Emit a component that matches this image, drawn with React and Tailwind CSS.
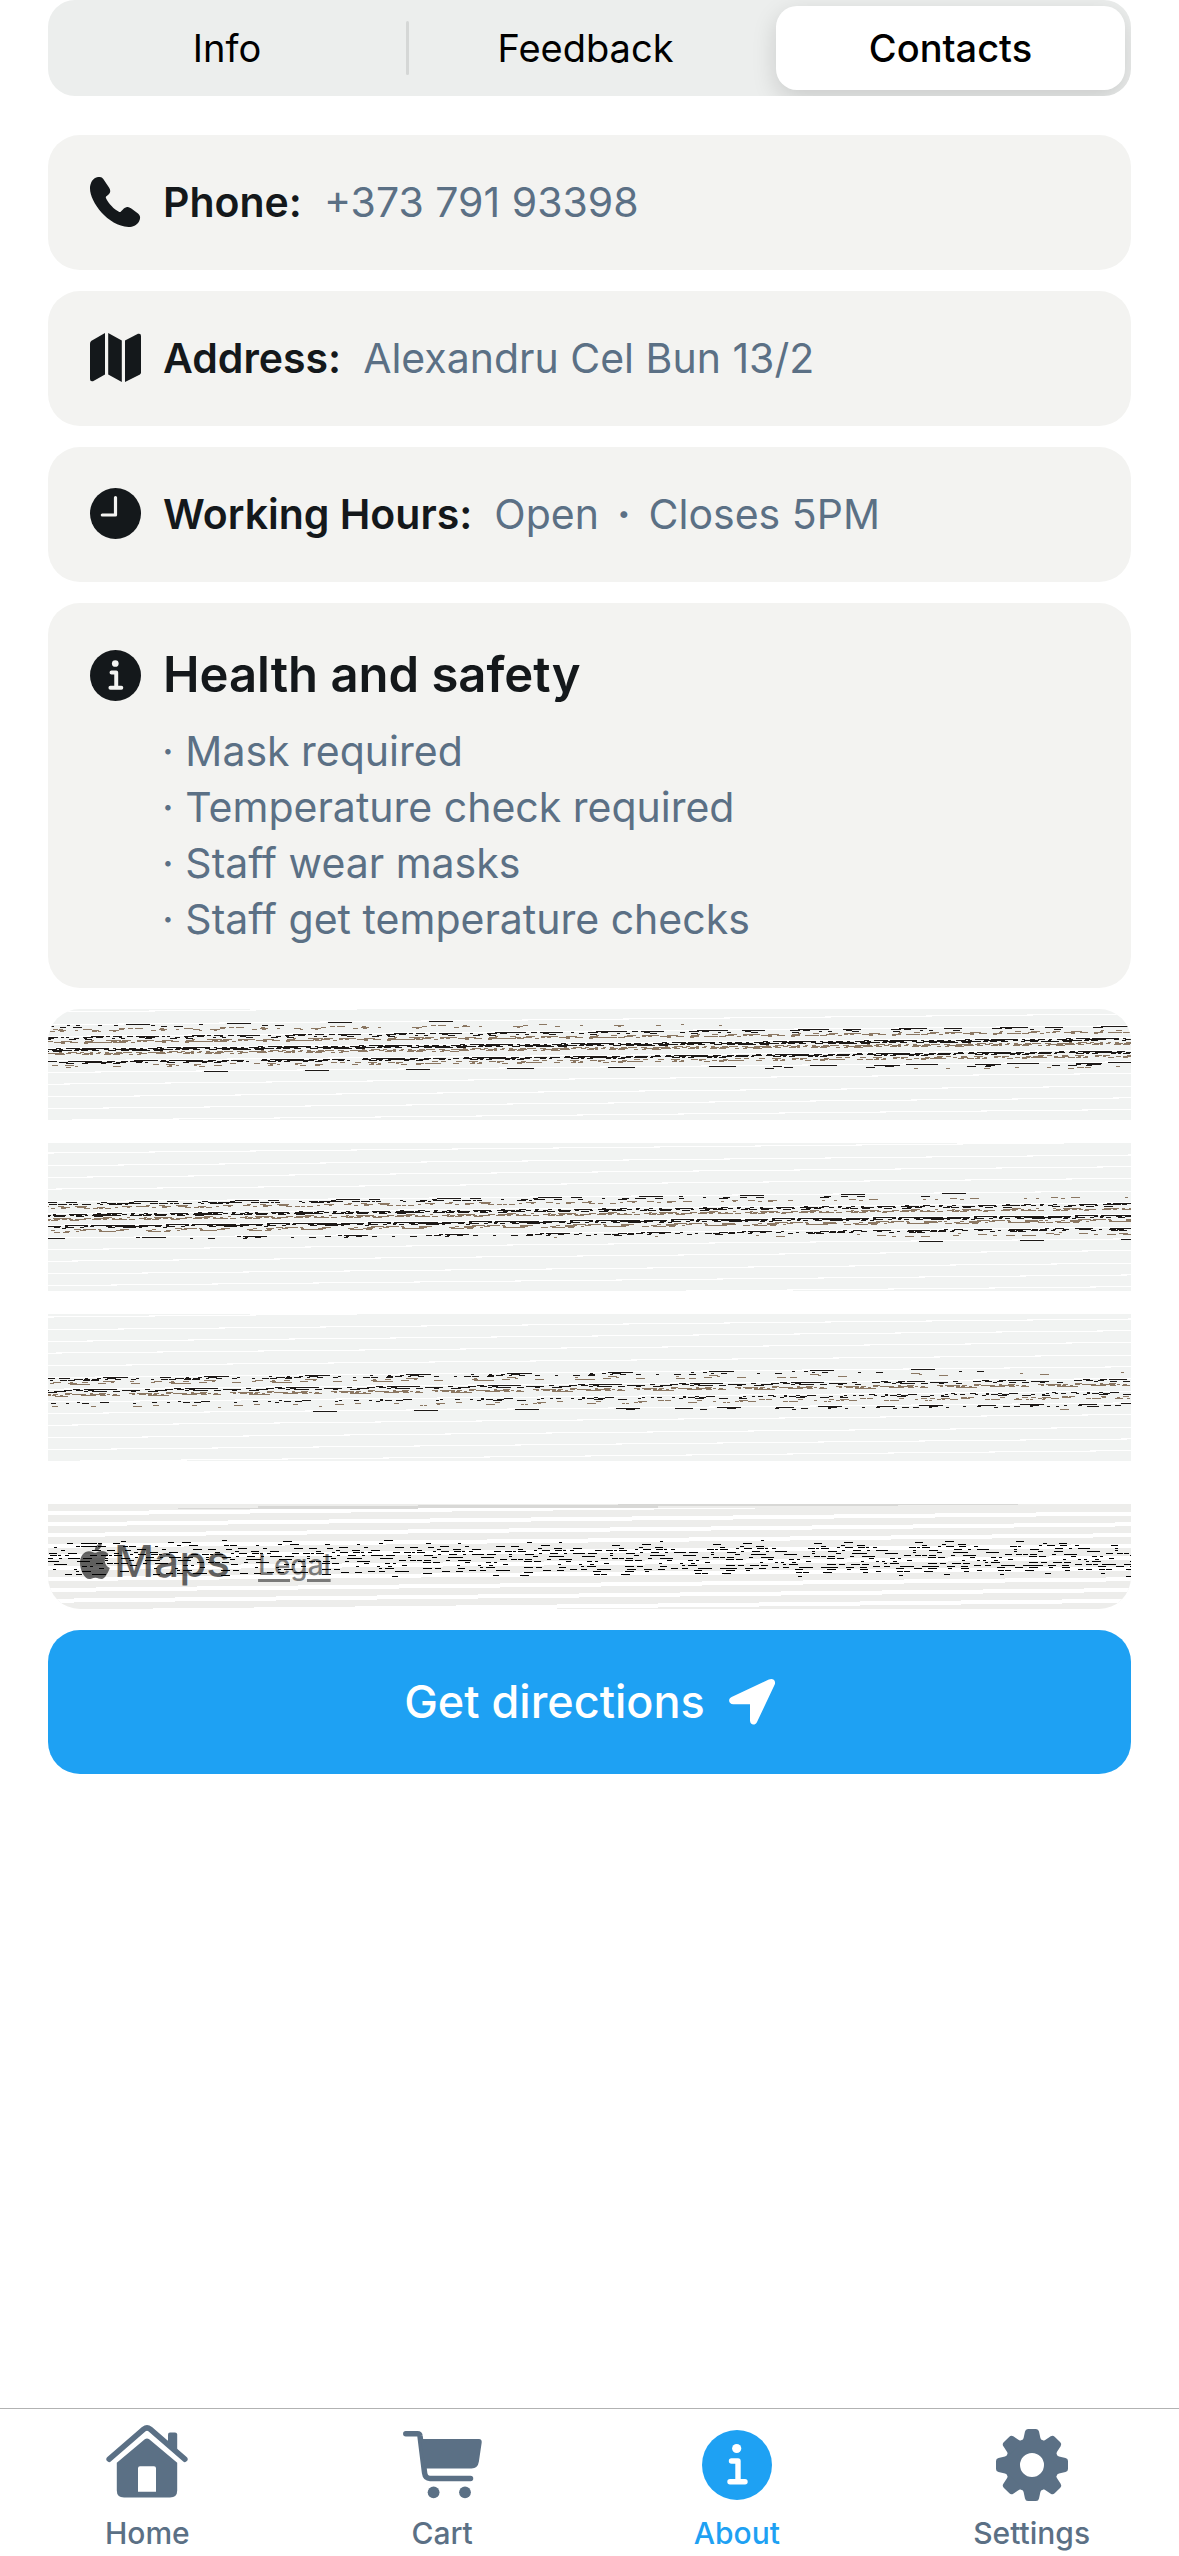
import React from "react";

const MAP_WIDTH = 1083;
const MAP_HEIGHT = 600;
const PERIOD = 101;

// Deterministic value between 0 and 1 for a pair of integers.
function noise(a, b) {
  let h = Math.imul(a + 11, 374761393) + Math.imul(b + 7, 668265263);
  h = Math.imul(h ^ (h >>> 13), 1274126177);
  return ((h ^ (h >>> 16)) >>> 0) / 4294967296;
}

function dash(x, y, w) {
  const left = Math.max(0, x);
  const right = Math.min(MAP_WIDTH, x + w);
  return right > left ? `M${left} ${y}h${right - left}v1h${left - right}z` : "";
}

// Hairlines that climb one pixel per period.
function hairlines(top, bottom, offset) {
  let d = "";
  for (let j = -1; j < 26; j++) {
    for (let k = -1; k < 12; k++) {
      const y = top + offset + j * 12 - k;
      if (y >= top && y < bottom) d += dash(k * PERIOD + ((j * 70) % PERIOD), y, PERIOD + 6);
    }
  }
  return d;
}

function dashes(band, rows, kind) {
  let d = "";
  for (let j = -1; j < 16; j++) {
    for (const s of rows) {
      for (let k = -1; k < 12; k++) {
        const y = band.top + band.offset + j * band.step - k + s;
        const dist = Math.abs(y - band.center) / band.reach;
        if (dist > 1) continue;
        const density = (1 - dist * dist) * band.fill;
        const count = 13;
        for (let i = 0; i < count; i++) {
          const seed = s * 31 + kind * 7 + j * 101 + band.top;
          if (noise(seed, i) > density) continue;
          const long = noise(seed + 5, i) > 0.86 && s < 3 && kind < 3;
          const w = long ? 18 : 3 + Math.floor(noise(seed + 9, i) * 7);
          const x = k * PERIOD + ((j * 70) % PERIOD) + i * 8 + Math.floor(noise(seed + 3, i) * 5);
          d += dash(x, y, w);
        }
      }
      // Sparse long strokes along the fringe of the band.
      if (s === 1 && kind === 1) {
        for (let k = -1; k < 12; k++) {
          const y = band.top + band.offset + j * band.step - k + s;
          const dist = Math.abs(y - band.center) / band.reach;
          if (dist > 0.6 && dist < 1.1) d += dash(k * PERIOD + ((j * 70) % PERIOD) + 8, y, 24);
        }
      }
    }
  }
  return d;
}

const BANDS = [
  { top: 0, bottom: 111, offset: 2, step: 12, center: 37, reach: 23, fill: 0.8 },
  { top: 134, bottom: 282, offset: 9, step: 12, center: 208, reach: 22, fill: 0.75 },
  { top: 305, bottom: 452, offset: 2, step: 12, center: 381, reach: 20, fill: 0.6 },
];
const FOOT = { top: 495, bottom: 600, offset: 0, step: 11, center: 549, reach: 19, fill: 0.55 };

function footStripes() {
  let d = "";
  for (let j = 0; j < 21; j++) {
    for (let k = 0; k < 12; k++) {
      const y = FOOT.top + 7 + j * 11 - k;
      const x = k * PERIOD - ((j * 22) % PERIOD);
      for (let r = 0; r < 4; r++) {
        if (y + r > FOOT.top + 3 && y + r < FOOT.bottom) d += dash(x, y + r, PERIOD);
      }
    }
  }
  return d;
}

function MapTiles() {
  return (
    <svg
      viewBox={`0 0 ${MAP_WIDTH} ${MAP_HEIGHT}`}
      preserveAspectRatio="xMidYMid slice"
      shapeRendering="crispEdges"
      className="block h-full w-full"
      role="img"
      aria-label="Map"
    >
      {BANDS.map((b) => (
        <g key={b.top}>
          <rect x="0" y={b.top} width={MAP_WIDTH} height={b.bottom - b.top} fill="#f1f3f2" />
          <path d={hairlines(b.top, b.bottom, b.offset)} fill="#ffffff" />
          <path d={dashes(b, [5, 6, 7], 2)} fill="#8b7762" />
          <path d={dashes(b, [1, 2, 3], 1)} fill="#1c1816" />
        </g>
      ))}
      <rect x="0" y={FOOT.top} width={MAP_WIDTH} height={FOOT.bottom - FOOT.top} fill="#ededeb" />
      <path d={footStripes()} fill="#ffffff" />
      <path d="M130 500h240v-1h240v-2h240v-1h120v-1h-400v1h-200v1h-160v2h-80z" fill="#d8d8d6" />
      <path d={dashes(FOOT, [1, 4, 6, 9], 3)} fill="#000000" />
    </svg>
  );
}

function PhoneIcon() {
  return (
    <svg viewBox="0 0 51 50" className="h-[50px] w-[51px] shrink-0" fill="currentColor" aria-hidden="true">
      <path d="M8 .1C10.200-.3 12 .2 13.300 2L19 10.500C20.800 13.300 20.500 15.300 18.800 17.300C17 19.200 15.200 19.300 16 21.300C18.500 26.500 24 32.500 29.300 35C31.500 35.800 33 30.600 37 30C39 29.800 40.500 31 42 32L48 36.600C50.600 38.700 50.600 41.800 49 44.500C46.500 48.500 43 50 38.500 50C18 49 0 25 0 11.500C0 6 3 .7 8 .1Z" />
    </svg>
  );
}

function MapIcon() {
  return (
    <svg viewBox="0 0 51 49" className="h-[49px] w-[51px] shrink-0" fill="currentColor" aria-hidden="true">
      <path d="M15 0V41.500L3 48.200Q0 49 0 46V10.500Q0 8.800 1.500 7.800Z" />
      <path d="M18.200 0L31.800 7.500V49L18.200 41.500Z" />
      <path d="M35 7.500L48 .8Q51 0 51 3V39.500Q51 40.800 49.500 41.700L35 49Z" />
    </svg>
  );
}

function ClockIcon() {
  return (
    <svg viewBox="0 0 51 51" className="h-[51px] w-[51px] shrink-0" aria-hidden="true">
      <circle cx="25.5" cy="25.500" r="25.500" fill="currentColor" />
      <path d="M25.500 9.500V27H12.300" fill="none" stroke="#f3f3f1" strokeWidth="3.200" strokeLinecap="round" strokeLinejoin="round" />
    </svg>
  );
}

function InfoIcon({ className, inner }) {
  return (
    <svg viewBox="0 0 70 70" className={className} aria-hidden="true">
      <circle cx="35" cy="35" r="35" fill="currentColor" />
      <circle cx="34.700" cy="18.500" r="4.600" fill={inner} />
      <path d="M29.500 31H36V51.800M28 51.800H43" fill="none" stroke={inner} strokeWidth="5.400" strokeLinecap="round" strokeLinejoin="round" />
    </svg>
  );
}

function ArrowIcon() {
  return (
    <svg viewBox="0 0 46 46" className="h-[46px] w-[46px]" fill="currentColor" aria-hidden="true">
      <path d="M39.800.6C44-1.200 47.300 1.700 45.600 5.800L27.900 43.200C26.100 46.900 21 46 21 41.600V25.300H4.300C-.4 25.300-1.400 19.800 2.600 17.900Z" />
    </svg>
  );
}

function HomeIcon() {
  return (
    <svg viewBox="0 0 82 80" className="h-[80px] w-[82px]" fill="currentColor" aria-hidden="true">
      <path d="M3.200 34.200L37.800 4.200Q41 1.600 44.200 4.200L78.800 34.200" fill="none" stroke="currentColor" strokeWidth="5.600" strokeLinecap="round" />
      <path d="M62 20V9.500Q62 7.500 64 7.500H69Q71.200 7.500 71.200 9.500V27Z" />
      <path fillRule="evenodd" d="M38.800 14.300Q41 12.500 43.200 14.300L71.200 37.800V65.500Q71.200 72.500 64 72.500H18Q10.800 72.500 10.800 65.500V37.800ZM34 41.300Q32 41.300 32 43.300V66.800H50V43.300Q50 41.300 48 41.300Z" />
    </svg>
  );
}

function CartIcon() {
  return (
    <svg viewBox="0 0 79 68" className="h-[68px] w-[79px]" fill="currentColor" aria-hidden="true">
      <path d="M2.800 2.800H14.500Q16.800 2.800 17 5L21.600 42Q22.300 47.400 27 47.400H67.500" fill="none" stroke="currentColor" strokeWidth="5.500" strokeLinecap="round" strokeLinejoin="round" />
      <path d="M18 8H76Q79 8 78.700 11.500L75.900 30.500Q74.900 37.400 68.500 37.400H21.500Z" />
      <circle cx="30.600" cy="61.300" r="5.900" />
      <circle cx="62" cy="61.300" r="5.900" />
    </svg>
  );
}

const TOOTH_ANGLES = [0, 45, 90, 135, 180, 225, 270, 315];

function GearIcon() {
  return (
    <svg viewBox="-36 -36 72 72" className="h-[72px] w-[72px]" fill="currentColor" aria-hidden="true">
      <path fillRule="evenodd" d="M0-27A27 27 0 1 1 0 27A27 27 0 1 1 0-27ZM0-12A12 12 0 1 0 0 12A12 12 0 1 0 0-12Z" />
      {TOOTH_ANGLES.map((a) => (
        <path key={a} transform={`rotate(${a})`} d="M-12-23Q-9-24-8.400-27L-7-33.500Q-6.500-36-4-36H4Q6.500-36 7-33.500L8.400-27Q9-24 12-23Z" />
      ))}
    </svg>
  );
}

function AppleMark() {
  return (
    <svg viewBox="0 0 30 37" className="h-[37px] w-[30px]" fill="currentColor" aria-hidden="true">
      <path d="M15 9.700C17 9.700 18.500 8 22 8C24.600 8 26.900 9.200 28.600 11.300C23 14.500 23.700 22.500 29.800 25C28.500 28.500 25.300 36 21.500 36C19.300 36 18 34.700 15.300 34.700C12.600 34.700 11.200 36.100 9.200 36.100C5 36.100 0 27.800 0 20C0 12.500 4.500 8.200 9 8.200C11.800 8.200 13.500 9.700 15 9.700Z" />
      <path d="M14.700 8C14.500 4 17.800.5 21.700 0C22.200 4.200 18.800 8.100 14.700 8Z" />
    </svg>
  );
}

function ContactCard({ icon, label, children }) {
  return (
    <section className="flex h-[135px] items-center gap-[22px] rounded-[32px] bg-[#f3f3f1] px-[42px] pb-0.5">
      {icon}
      <h2 className="font-semibold">{label}</h2>
      <p className="text-[#5b7085]">{children}</p>
    </section>
  );
}

const SAFETY = ["Mask required", "Temperature check required", "Staff wear masks", "Staff get temperature checks"];

const TABS = [
  { name: "Home", icon: <HomeIcon /> },
  { name: "Cart", icon: <CartIcon /> },
  { name: "About", icon: <InfoIcon className="h-[70px] w-[70px]" inner="#ffffff" />, active: true },
  { name: "Settings", icon: <GearIcon /> },
];

export default function App() {
  return (
    <div className="flex min-h-screen flex-col bg-white font-['Inter',sans-serif] text-[#14181b]">
      <main className="flex flex-col px-12 text-[41px] leading-[56px]">
        <div role="tablist" className="grid h-24 grid-cols-3 overflow-hidden rounded-[27px] bg-[#eceeed] text-[38px] text-black">
          <button role="tab" aria-selected="false" className="flex items-center">
            <span className="flex-1">Info</span>
            <span className="h-[54px] w-[3px] rounded-full bg-[#d5d7d6]" />
          </button>
          <button role="tab" aria-selected="false" className="pr-2">Feedback</button>
          <button role="tab" aria-selected="true" className="m-[6px] rounded-[21px] bg-white font-medium shadow-[0_8px_24px_rgba(0,0,0,0.15)]">
            Contacts
          </button>
        </div>

        <div className="mt-[39px] flex flex-col gap-[21px]">
          <ContactCard icon={<PhoneIcon />} label="Phone:">+373 791 93398</ContactCard>
          <ContactCard icon={<MapIcon />} label="Address:">Alexandru Cel Bun 13/2</ContactCard>
          <ContactCard icon={<ClockIcon />} label="Working Hours:">
            Open<span className="mx-[18px] font-bold">·</span>Closes 5PM
          </ContactCard>

          <section className="rounded-[32px] bg-[#f3f3f1] px-[42px] pt-10 pb-[41px]">
            <div className="flex items-center gap-[22px]">
              <InfoIcon className="h-[51px] w-[51px] shrink-0" inner="#f3f3f1" />
              <h2 className="text-[49px] leading-[64px] font-semibold">Health and safety</h2>
            </div>
            <ul className="mt-4 pl-[72px] text-[#5b7085]">
              {SAFETY.map((item) => (
                <li key={item}>· {item}</li>
              ))}
            </ul>
          </section>

          <section className="relative h-[600px] overflow-hidden rounded-[32px]">
            <MapTiles />
            <div className="absolute bottom-4 left-8 flex items-center text-black opacity-60">
              <AppleMark />
              <span className="ml-1 text-[44px] font-medium">Maps</span>
              <a href="#legal" className="ml-7 pt-2 text-[28px] font-medium opacity-80 underline decoration-[3px] underline-offset-4">Legal</a>
            </div>
          </section>

          <button className="flex h-36 items-center justify-center gap-6 rounded-[32px] bg-[#1ea1f3] text-[45px] font-medium text-white">
            Get directions
            <ArrowIcon />
          </button>
        </div>
      </main>

      <nav className="mt-auto grid h-[148px] grid-cols-4 border-t border-[#b2b2b2] text-[#5b7085]">
        {TABS.map((t) => (
          <a
            key={t.name}
            href={`#${t.name.toLowerCase()}`}
            aria-current={t.active ? "page" : undefined}
            className={t.active ? "flex flex-col items-center pt-4 text-[#1ea1f3]" : "flex flex-col items-center pt-4"}
          >
            <span className="flex h-20 items-center">{t.icon}</span>
            <span className="mt-2 text-[30px] leading-[40px] font-medium">{t.name}</span>
          </a>
        ))}
      </nav>
    </div>
  );
}
